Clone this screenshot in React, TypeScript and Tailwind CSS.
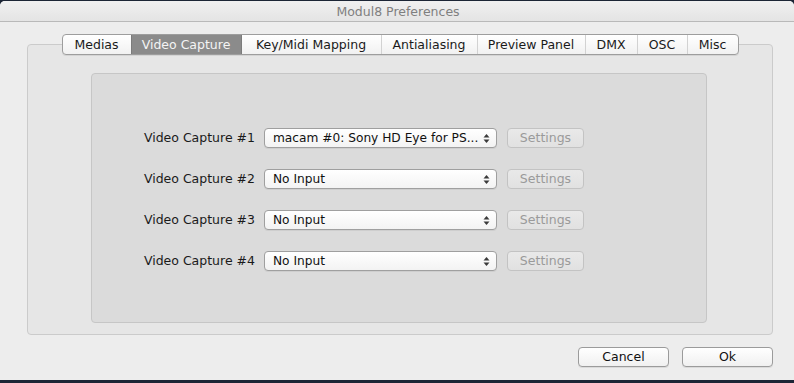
import React from "react";

const tabs: { label: string; w: string; active?: boolean }[] = [
  { label: "Medias", w: "w-[68px]" },
  { label: "Video Capture", w: "w-[111px]", active: true },
  { label: "Key/Midi Mapping", w: "w-[139px]" },
  { label: "Antialiasing", w: "w-[96px]" },
  { label: "Preview Panel", w: "w-[108px]" },
  { label: "DMX", w: "w-[52px]" },
  { label: "OSC", w: "w-[50px]" },
  { label: "Misc", w: "w-[51px]" },
];

const rows = [
  "macam #0: Sony HD Eye for PS...",
  "No Input",
  "No Input",
  "No Input",
];

function Arrows() {
  return (
    <svg width="7" height="11" viewBox="0 0 7 11" className="shrink-0">
      <path d="M3.5 1 L6.5 4.5 L0.5 4.5 Z" fill="#3a3a3a" />
      <path d="M3.5 10 L6.5 6.5 L0.5 6.5 Z" fill="#3a3a3a" />
    </svg>
  );
}

export default function App() {
  return (
    <div
      className="w-[794px] h-[383px] bg-[#1c2535] overflow-hidden pt-[1px]"
      style={{ fontFamily: '"DejaVu Sans", "Liberation Sans", sans-serif' }}
    >
      <div className="w-[794px] h-[379px] bg-[#ededed] rounded-t-[5px] flex flex-col overflow-hidden">
        {/* Title bar */}
        <div className="h-[21px] shrink-0 bg-gradient-to-b from-[#f0f0f0] to-[#e4e4e4] border-b border-[#b9b9b9] flex items-center justify-center">
          <span className="text-[12.5px] text-[#7f7f7f] leading-[16px] mt-[2px] ml-[2px]">Modul8 Preferences</span>
        </div>

        {/* Group box */}
        <div className="ml-[27px] mt-[22px] w-[746px] h-[291px] bg-[#e6e6e6] border border-[#cbcbcb] rounded-[4px] flex flex-col">
          {/* Tabs */}
          <div className="-mt-[11px] self-center flex h-[21px] rounded-[4px] border border-[#9d9d9d] bg-gradient-to-b from-[#ffffff] to-[#f1f1f1] overflow-hidden shadow-[0_1px_0_rgba(0,0,0,0.08)]">
            {tabs.map((t, i) => (
              <div
                key={t.label}
                className={`${t.w} h-full flex items-center justify-center text-[12.5px] leading-[16px] ${
                  t.active
                    ? "bg-[#8b8b8b] text-[#f4f4f4] border-x border-[#7c7c7c]"
                    : "text-[#1a1a1a]"
                } ${i > 0 && !t.active && !tabs[i - 1].active ? "border-l border-[#d2d2d2]" : ""}`}
              >
                {t.label}
              </div>
            ))}
          </div>

          {/* Inner panel */}
          <div className="ml-[63px] mt-[18px] w-[616px] h-[250px] bg-[#dbdbdb] border border-[#c6c6c6] rounded-[4px] flex flex-col pt-[54px] gap-[21px]">
            {rows.map((val, i) => (
              <div key={i} className="flex items-center h-[20px]">
                <div className="w-[163px] text-right text-[12.5px] text-[#1a1a1a] leading-[16px] whitespace-nowrap">
                  Video Capture #{i + 1}
                </div>
                <div className="ml-[9px] w-[233px] h-[20px] rounded-[4px] border border-[#9f9f9f] bg-gradient-to-b from-[#ffffff] to-[#f3f3f3] shadow-[0_1px_0_rgba(0,0,0,0.06)] flex items-center pl-[8px] pr-[6px]">
                  <span className="flex-1 text-[12.2px] text-[#111] leading-[16px] whitespace-nowrap">{val}</span>
                  <Arrows />
                </div>
                <div className="ml-[10px] w-[77px] h-[20px] rounded-[4px] border border-[#c3c3c3] bg-gradient-to-b from-[#e9e9e9] to-[#e1e1e1] flex items-center justify-center text-[12.5px] text-[#9a9a9a] leading-[16px]">
                  Settings
                </div>
              </div>
            ))}
          </div>
        </div>

        {/* Bottom buttons */}
        <div className="flex justify-end gap-[13px] mr-[21px] mt-[12px]">
          <div className="w-[91px] h-[20px] rounded-[4px] border border-[#9b9b9b] bg-gradient-to-b from-[#ffffff] to-[#f0f0f0] shadow-[0_1px_0_rgba(0,0,0,0.08)] flex items-center justify-center text-[12.5px] text-[#111] leading-[16px]">
            Cancel
          </div>
          <div className="w-[91px] h-[20px] rounded-[4px] border border-[#9b9b9b] bg-gradient-to-b from-[#ffffff] to-[#f0f0f0] shadow-[0_1px_0_rgba(0,0,0,0.08)] flex items-center justify-center text-[12.5px] text-[#111] leading-[16px]">
            Ok
          </div>
        </div>
      </div>
    </div>
  );
}
